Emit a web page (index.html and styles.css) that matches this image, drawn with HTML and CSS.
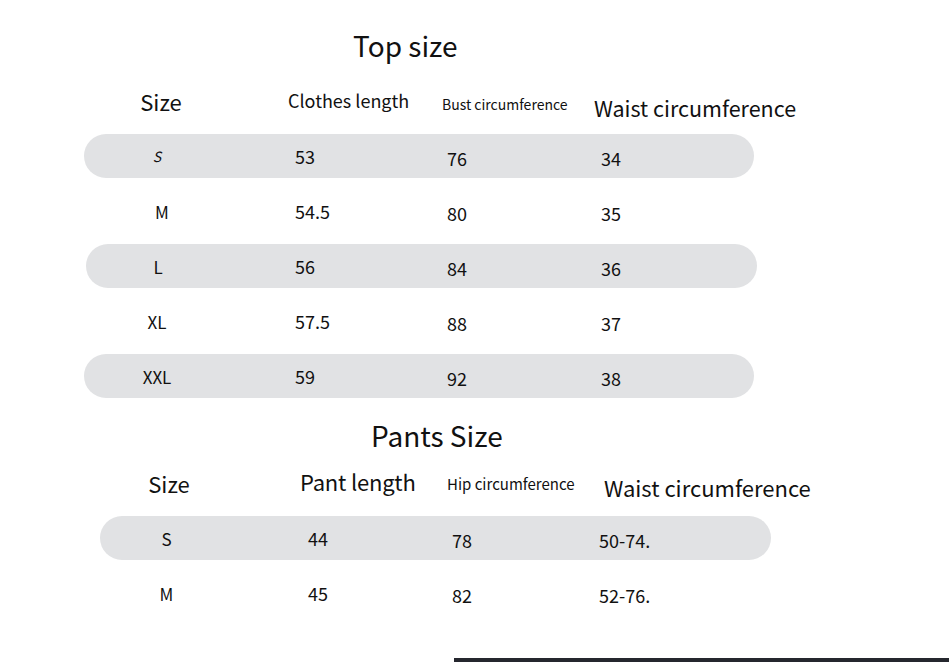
FILE: index.html
```html
<!DOCTYPE html>
<html>
<head>
<meta charset="utf-8">
<link rel="stylesheet" href="styles.css">
</head>
<body>
<section class="chart chart-top">
  <h2 class="title title-top">Top size</h2>
  <div class="head head-top">
    <span class="h-size">Size</span>
    <span class="h-len">Clothes length</span>
    <span class="h-small">Bust circumference</span>
    <span class="h-waist">Waist circumference</span>
  </div>
  <div class="rows rows-top">
    <div class="row pill"><span class="c-size s-ital">S</span><span>53</span><span class="low">76</span><span class="low">34</span></div>
    <div class="row"><span class="c-size c-m">M</span><span>54.5</span><span class="low">80</span><span class="low">35</span></div>
    <div class="row pill shift"><span class="c-size">L</span><span>56</span><span class="low">84</span><span class="low">36</span></div>
    <div class="row"><span class="c-size">XL</span><span>57.5</span><span class="low">88</span><span class="low">37</span></div>
    <div class="row pill"><span class="c-size">XXL</span><span>59</span><span class="low">92</span><span class="low">38</span></div>
  </div>
</section>
<section class="chart chart-pants">
  <h2 class="title title-pants">Pants Size</h2>
  <div class="head head-pants">
    <span class="h-size">Size</span>
    <span class="h-len">Pant length</span>
    <span class="h-small">Hip circumference</span>
    <span class="h-waist">Waist circumference</span>
  </div>
  <div class="rows rows-pants">
    <div class="row pill"><span class="c-size">S</span><span>44</span><span class="low">78</span><span class="low">50-74.</span></div>
    <div class="row"><span class="c-size">M</span><span>45</span><span class="low">82</span><span class="low">52-76.</span></div>
  </div>
</section>
<div class="bottom-bar"></div>
</body>
</html>
```
FILE: styles.css
```css
html, body {
  margin: 0;
  padding: 0;
  background: #ffffff;
}
body {
  width: 949px;
  height: 662px;
  overflow: hidden;
  font-family: "Noto Sans CJK SC", "Noto Sans", sans-serif;
  color: #111111;
}
.title {
  margin: 0;
  height: 40px;
  line-height: 40px;
  font-weight: 400;
  font-size: 28px;
}
.title-top {
  margin-top: 25px;
  padding-left: 353px;
}
.title-pants {
  margin-top: 17px;
  padding-left: 371px;
}
.head {
  display: grid;
  height: 34px;
  align-items: center;
  line-height: 1;
}
.head-top {
  margin: 22px 0 13px 84px;
  grid-template-columns: 204px 154px 152px 1fr;
}
.head-pants {
  margin: 12px 0 15px 100px;
  grid-template-columns: 200px 147px 157px 1fr;
}
.h-size {
  font-size: 22px;
  text-align: center;
}
.head-top .h-size { padding-right: 50px; margin-top: -6px; }
.head-pants .h-size { padding-right: 62px; margin-top: -2px; }
.h-len {
  font-size: 18px;
  margin-top: -8px;
}
.head-pants .h-len { font-size: 22px; margin-top: -6px; letter-spacing: -0.2px; }
.h-small {
  font-size: 14px;
  margin-top: 0;
}
.head-pants .h-small { font-size: 15px; margin-top: -2px; }
.h-waist {
  font-size: 21.5px;
  margin-top: 7px;
}
.head-pants .h-waist { font-size: 22px; margin-top: 6px; }
.rows {
  display: flex;
  flex-direction: column;
  gap: 11px;
}
.rows-top { margin-left: 84px; width: 670px; }
.rows-pants { margin-left: 100px; width: 671px; }
.row {
  display: grid;
  height: 44px;
  align-items: center;
  font-size: 18px;
  line-height: 1;
  border-radius: 22px;
}
.rows-top .row { grid-template-columns: 211px 152px 154px 1fr; }
.rows-pants .row { grid-template-columns: 208px 144px 147px 1fr; }
.pill { background: #e1e2e4; }
.shift { margin-left: 2px; margin-right: -3px; grid-template-columns: 209px 152px 154px 1fr !important; }
.c-size {
  font-size: 17px;
  text-align: center;
}
.rows-top .c-size { padding-right: 65px; }
.rows-top .c-m { padding-left: 10px; }
.rows-pants .c-size { padding-right: 75px; }
.s-ital {
  font-size: 14px;
  font-style: italic;
}
.low { margin-top: 4px; }
.bottom-bar {
  margin-top: 43px;
  margin-left: 454px;
  height: 4px;
  background: #25272e;
}
```
